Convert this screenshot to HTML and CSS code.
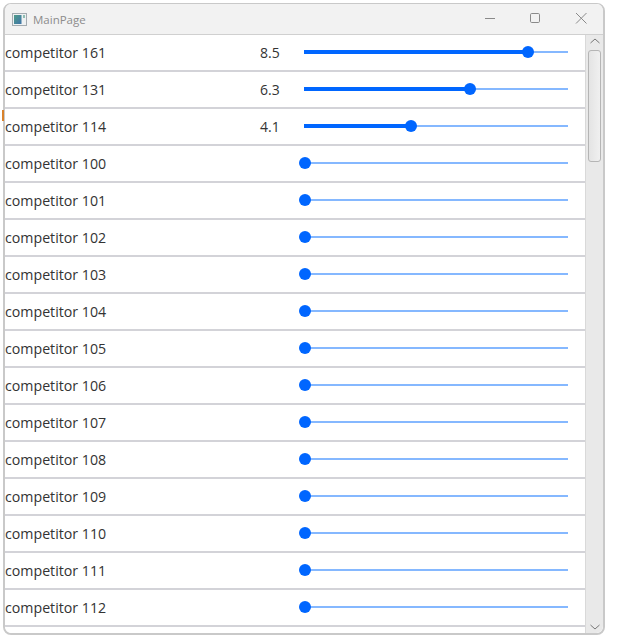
FILE: index.html
```html
<!DOCTYPE html>
<html lang="en">
<head>
<meta charset="utf-8">
<title>MainPage</title>
<link rel="stylesheet" href="styles.css">
</head>
<body>
<div class="window">
  <span class="focus-mark"></span>
  <header class="titlebar">
    <svg class="app-icon" width="15" height="13" viewBox="0 0 15 13">
      <defs><linearGradient id="pane" x1="0" y1="0" x2="1" y2="1"><stop offset="0" stop-color="#4f9c8a"/><stop offset="1" stop-color="#3f74a8"/></linearGradient></defs>
      <rect x="0.5" y="0.5" width="14" height="12" fill="#eef1f2" stroke="#a3abb0"/>
      <rect x="2" y="2" width="7.500" height="9" fill="url(#pane)"/>
      <rect x="11" y="2" width="2" height="3" fill="#8fbdb2"/>
    </svg>
    <span class="title">MainPage</span>
    <div class="controls">
      <svg class="ctl" width="46" height="30" viewBox="0 0 46 30"><path d="M19 14.500h10" stroke="#8a8a8a" fill="none"/></svg>
      <svg class="ctl" width="46" height="30" viewBox="0 0 46 30"><rect x="18.500" y="9.500" width="9" height="9" rx="1.200" stroke="#8a8a8a" fill="none"/></svg>
      <svg class="ctl" width="46" height="30" viewBox="0 0 46 30"><path d="M18 9l10.500 10.500M28.500 9l-10.500 10.500" stroke="#8a8a8a" fill="none"/></svg>
    </div>
  </header>
  <div class="content">
    <main class="list">
      <div class="row"><span class="name">competitor 161</span><span class="score">8.5</span><div class="slider"><div class="fill" style="width:84.5%"></div><span class="thumb" style="left:84.5%"></span></div></div>
      <div class="row"><span class="name">competitor 131</span><span class="score">6.3</span><div class="slider"><div class="fill" style="width:62.7%"></div><span class="thumb" style="left:62.7%"></span></div></div>
      <div class="row"><span class="name">competitor 114</span><span class="score">4.1</span><div class="slider"><div class="fill" style="width:40.5%"></div><span class="thumb" style="left:40.5%"></span></div></div>
      <div class="row"><span class="name">competitor 100</span><span class="score"></span><div class="slider"><span class="thumb"></span></div></div>
      <div class="row"><span class="name">competitor 101</span><span class="score"></span><div class="slider"><span class="thumb"></span></div></div>
      <div class="row"><span class="name">competitor 102</span><span class="score"></span><div class="slider"><span class="thumb"></span></div></div>
      <div class="row"><span class="name">competitor 103</span><span class="score"></span><div class="slider"><span class="thumb"></span></div></div>
      <div class="row"><span class="name">competitor 104</span><span class="score"></span><div class="slider"><span class="thumb"></span></div></div>
      <div class="row"><span class="name">competitor 105</span><span class="score"></span><div class="slider"><span class="thumb"></span></div></div>
      <div class="row"><span class="name">competitor 106</span><span class="score"></span><div class="slider"><span class="thumb"></span></div></div>
      <div class="row"><span class="name">competitor 107</span><span class="score"></span><div class="slider"><span class="thumb"></span></div></div>
      <div class="row"><span class="name">competitor 108</span><span class="score"></span><div class="slider"><span class="thumb"></span></div></div>
      <div class="row"><span class="name">competitor 109</span><span class="score"></span><div class="slider"><span class="thumb"></span></div></div>
      <div class="row"><span class="name">competitor 110</span><span class="score"></span><div class="slider"><span class="thumb"></span></div></div>
      <div class="row"><span class="name">competitor 111</span><span class="score"></span><div class="slider"><span class="thumb"></span></div></div>
      <div class="row"><span class="name">competitor 112</span><span class="score"></span><div class="slider"><span class="thumb"></span></div></div>
    </main>
    <aside class="scrollbar">
      <svg class="arrow" width="14" height="12" viewBox="0 0 14 12"><path d="M2.500 8l4.500-4 4.500 4" stroke="#777" fill="none"/></svg>
      <div class="scroll-thumb"></div>
      <div class="scroll-rest"></div>
      <svg class="arrow" width="14" height="12" viewBox="0 0 14 12"><path d="M2.500 4l4.500 4 4.500-4" stroke="#777" fill="none"/></svg>
    </aside>
  </div>
</div>
</body>
</html>
```
FILE: styles.css
```css
* { box-sizing: border-box; }
html, body { margin: 0; padding: 0; background: #fff; }
body { padding: 3px 38px 0 3px; height: 644px; overflow: hidden; font-family: "Open Sans", "Noto Sans", "Liberation Sans", sans-serif; }
.window {
  position: relative;
  width: 602px;
  height: 632px;
  border: 1px solid #c9c9c9;
  border-width: 1px 2px 2px 2px;
  border-radius: 8px;
  display: flex;
  flex-direction: column;
}
.focus-mark { position: absolute; left: -3px; top: 106px; width: 2px; height: 11px; background: #d9822b; }
.titlebar {
  height: 31px;
  flex: none;
  display: flex;
  align-items: center;
  padding-left: 7px;
  background: #f2f2f2;
  border-bottom: 1px solid #d0d0d0;
  border-radius: 7px 7px 0 0;
}
.app-icon { margin-right: 6px; }
.title { font-size: 11.500px; color: #8c8c8c; }
.controls { margin-left: auto; margin-right: -1px; display: flex; }
.ctl { display: block; }
.content { flex: 1; min-height: 0; display: flex; overflow: hidden; border-radius: 0 0 7px 7px; }
.list { flex: 1; min-width: 0; overflow: hidden; background: #fff; }
.row {
  height: 37px;
  border-bottom: 2px solid #d3d3d8;
  display: flex;
  align-items: center;
}
.name { width: 255px; font-size: 14.200px; color: #333; }
.score { width: 44px; font-size: 14px; color: #333; }
.slider { position: relative; width: 264px; height: 2px; margin-bottom: 1px; background: #85b8ff; }
.fill { height: 4px; margin-top: -1px; background: #0066ff; }
.thumb { position: absolute; left: 0; top: 50%; width: 12px; height: 12px; margin: -6px 0 0 -5.500px; border-radius: 50%; background: #0066ff; }
.scrollbar {
  flex: none;
  width: 18px;
  background: #e9e9e9;
  border-left: 1px solid #d9d9d9;
  display: flex;
  flex-direction: column;
  align-items: center;
}
.arrow { flex: none; }
.scroll-thumb { flex: none; margin-top: 3px; width: 13px; height: 112px; border: 1px solid #b5b5b5; border-radius: 3px; background: linear-gradient(90deg, #e4e4e4, #f0f0f0); }
.scroll-rest { flex: 1; }
```
